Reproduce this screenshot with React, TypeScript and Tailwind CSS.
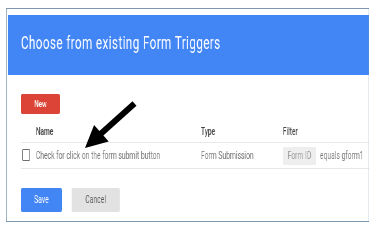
import React from "react";

export default function App() {
  return (
    <div className="relative w-[377px] h-[228px] bg-white overflow-hidden antialiased" style={{ fontFamily: "Roboto, 'Liberation Sans', sans-serif" }}>
      <div className="ml-[6px] pt-[8px]">
        <div className="origin-top-left scale-x-[0.65] will-change-transform w-[559px] h-[214px] border-x-[1.5px] border-y border-[#7b98b0] bg-white flex flex-col">
          <div className="mt-[6px] ml-[2px] h-[60px] bg-[#4285f4] pl-[20px] pt-[18px]">
            <div className="text-[18px] leading-[20px] font-normal tracking-[0.6px] text-white">Choose from existing Form Triggers</div>
          </div>
          <div className="ml-[22px] mt-[19px]">
            <div className="w-[60px] h-[20px] rounded-[2px] bg-[#db4437] flex items-center justify-center text-[9.5px] font-medium text-white">New</div>
          </div>
          <div className="ml-[22px] mt-[7px] overflow-hidden">
            <div className="grid grid-cols-[277px_126px_1fr] h-[22px] items-center border-b border-[#e8e8e8] text-[10px] font-medium text-[#444]">
              <div className="pl-[23px]">Name</div>
              <div>Type</div>
              <div>Filter</div>
            </div>
            <div className="grid grid-cols-[277px_126px_1fr] h-[26px] items-center border-b border-[#e8e8e8] text-[10.4px] text-[#777] whitespace-nowrap">
              <div className="flex items-center gap-[9px] pl-[2px]">
                <div className="w-[12px] h-[12px] border-x-[1.5px] border-y border-[#6f6f6f] rounded-[1px]" />
                <span>Check for click on the form submit button</span>
              </div>
              <div>Form Submission</div>
              <div className="flex items-center">
                <div className="w-[51px] h-[18px] bg-[#eeeeee] flex items-center justify-center text-[#999]">Form ID</div>
                <span className="ml-[6px]">equals gform1</span>
              </div>
            </div>
          </div>
          <div className="ml-[22px] mt-[19px] flex gap-[15px]">
            <div className="w-[63px] h-[24px] rounded-[2px] bg-[#4285f4] flex items-center justify-center text-[10.5px] text-white">Save</div>
            <div className="w-[74px] h-[24px] rounded-[2px] bg-[#e2e2e2] flex items-center justify-center text-[10.5px] text-[#555]">Cancel</div>
          </div>
        </div>
      </div>
      <svg className="absolute left-0 top-0" width="377" height="228" viewBox="0 0 377 228">
        <polygon
          points="132.5,101.3 136.5,105.7 103.4,135.5 108.7,141.5 85,148 94.1,125.1 99.4,131.1"
          fill="#000"
        />
      </svg>
    </div>
  );
}
